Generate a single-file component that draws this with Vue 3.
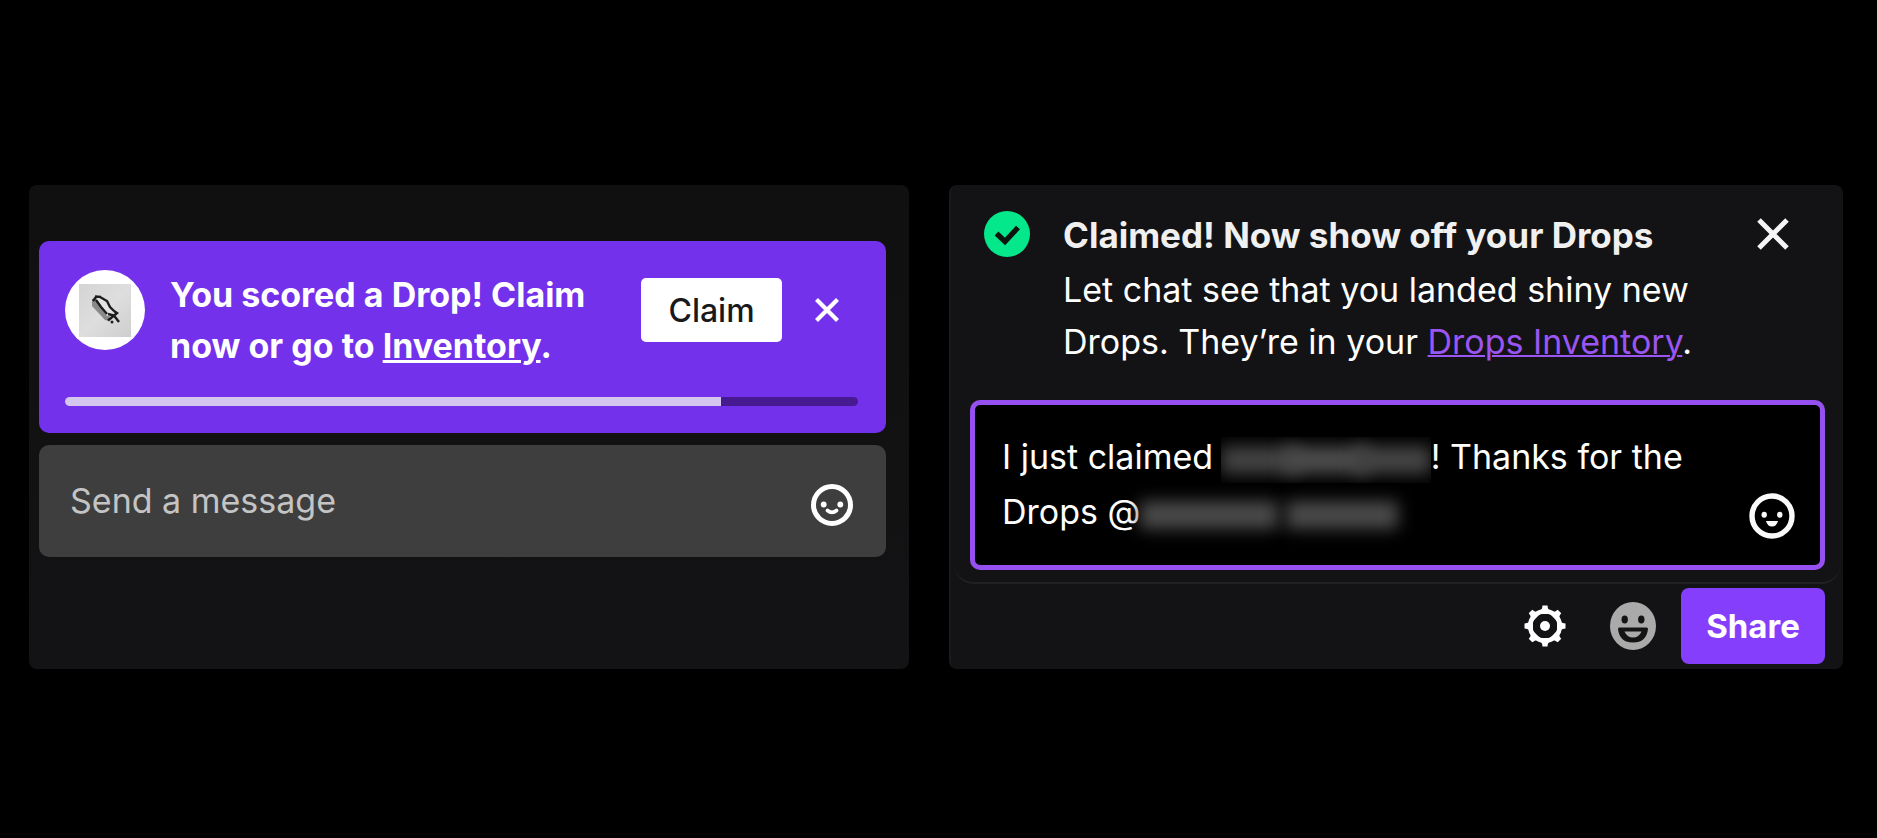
<script setup>
import { ref } from 'vue'

const progress = ref(82.7)
const message = ref('')
</script>

<template>
  <main class="page">
    <section class="panel chat" aria-label="Chat">
      <div class="banner">
        <div class="banner-row">
          <span class="avatar">
            <svg viewBox="0 0 80 80" role="img" aria-label="Drop reward">
              <defs>
                <linearGradient id="tile" x1="0" y1="0" x2="1" y2="1">
                  <stop offset="0" stop-color="#d4d4d4" />
                  <stop offset="0.5" stop-color="#dedede" />
                  <stop offset="1" stop-color="#cecece" />
                </linearGradient>
              </defs>
              <circle cx="40" cy="40" r="40" fill="#fff" />
              <rect x="14" y="14" width="52" height="53" fill="url(#tile)" />
              <path d="M27 29l4 0 14 15-1 7-4-1-13-14z" fill="#8a8a8a" />
              <path d="M32 28l4 0 11 12-1 6-4 0-9-12z" fill="#e4e4e4" />
              <path d="M28 31l3-4M30 26.500l6 .5M35 27l7 4 3 6 4 4M31 30l5 7 6 7M49 41l3 2-3 2.500-6 5M43 44l6 1.500 5 6.500" fill="none" stroke="#1c1c1c" stroke-width="2.400" />
              <circle cx="47" cy="52" r="1.500" fill="#222" />
            </svg>
          </span>
          <p class="banner-text">You scored a Drop! Claim now or go to <a href="#inventory">Inventory</a>.</p>
          <button class="claim" type="button">Claim</button>
          <button class="icon-button close-small" type="button" aria-label="Dismiss">
            <svg width="26" height="26" viewBox="0 0 26 26"><path d="M2.500 2.500l21 21M23.500 2.500l-21 21" stroke="#fff" stroke-width="4.200" /></svg>
          </button>
        </div>
        <div class="track" role="progressbar" aria-label="Time left to claim" :aria-valuenow="progress" aria-valuemin="0" aria-valuemax="100">
          <div class="fill" :style="{ width: progress + '%' }"></div>
        </div>
      </div>

      <div class="composer">
        <input v-model="message" class="message" type="text" placeholder="Send a message" aria-label="Send a message" />
        <button class="icon-button" type="button" aria-label="Emotes">
          <svg width="42" height="42" viewBox="0 0 42 42">
            <circle cx="21" cy="21" r="18.500" fill="none" stroke="#fff" stroke-width="5" />
            <circle cx="12.700" cy="20.500" r="2.900" fill="#fff" />
            <circle cx="29.300" cy="20.500" r="2.900" fill="#fff" />
            <path d="M16.500 26.500q4.500 3.800 9 0" fill="none" stroke="#fff" stroke-width="3.600" stroke-linecap="round" />
          </svg>
        </button>
      </div>
    </section>

    <section class="panel share" aria-label="Share your Drops">
      <div class="share-card">
        <header class="notice">
          <svg class="check" width="46" height="46" viewBox="0 0 46 46" aria-hidden="true">
            <circle cx="23" cy="23" r="23" fill="#05e78b" />
            <path d="M12.500 22.500l8.500 8 13-14" fill="none" stroke="#0b1510" stroke-width="5.400" />
          </svg>
          <div class="notice-text">
            <h2>Claimed! Now show off your Drops</h2>
            <p>Let chat see that you landed shiny new Drops. They’re in your <a href="#drops">Drops Inventory</a>.</p>
          </div>
          <button class="icon-button close-large" type="button" aria-label="Close">
            <svg width="32" height="32" viewBox="0 0 32 32"><path d="M2 2l28 28M30 2l-28 28" stroke="#f4f4f4" stroke-width="5" /></svg>
          </button>
        </header>

        <div class="editor">
          <div class="editor-text" role="textbox" aria-multiline="true" aria-label="Message to chat" contenteditable="true" spellcheck="false">I just claimed <span class="hidden-item" contenteditable="false"><i></i><i></i><i></i></span>! Thanks for the<br />Drops @<span class="hidden-user" contenteditable="false"><i></i><i></i></span></div>
          <button class="icon-button" type="button" aria-label="Emotes">
            <svg width="46" height="46" viewBox="0 0 46 46">
              <circle cx="23" cy="23" r="20" fill="none" stroke="#fafafa" stroke-width="5.400" />
              <ellipse cx="15.200" cy="21.700" rx="2.700" ry="3" fill="#fafafa" />
              <ellipse cx="30.800" cy="21.700" rx="2.700" ry="3" fill="#fafafa" />
              <path d="M17 28h12q-1.500 5.500-6 5.500t-6-5.500z" fill="#fafafa" />
            </svg>
          </button>
        </div>
      </div>

      <footer class="actions">
        <button class="icon-button" type="button" aria-label="Settings">
          <svg width="42" height="42" viewBox="0 0 42 42">
            <g fill="#fff">
              <path v-for="n in 8" :key="n" d="M13 9q5.300-3 5.500-8.500h5q.2 5.500 5.500 8.500z" :transform="`rotate(${n * 45} 21 21)`" />
            </g>
            <circle cx="21" cy="21" r="14.800" fill="none" stroke="#fff" stroke-width="4.600" />
            <circle cx="21" cy="21" r="5" fill="#fff" />
          </svg>
        </button>
        <button class="icon-button" type="button" aria-label="Reactions">
          <svg width="46" height="48" viewBox="0 0 46 48">
            <ellipse cx="23" cy="24" rx="23" ry="24" fill="#aaa" />
            <ellipse cx="14.700" cy="17.500" rx="3.200" ry="4" fill="#141414" />
            <ellipse cx="31.300" cy="17.500" rx="3.200" ry="4" fill="#141414" />
            <path d="M9.500 27h27q-1.500 12-13.500 12t-13.500-12z" fill="#141414" stroke="#141414" stroke-width="3" stroke-linejoin="round" />
            <path d="M14.500 29.500h17q-2.500 6-8.500 6t-8.500-6z" fill="#aaa" />
          </svg>
        </button>
        <button class="share-button" type="button">Share</button>
      </footer>
    </section>
  </main>
</template>

<style>
body {
  background: #000;
}
</style>

<style scoped>
.page {
  box-sizing: border-box;
  min-height: 100vh;
  padding: 185px 34px 40px 29px;
  display: grid;
  grid-template-columns: 880fr 894fr;
  align-items: start;
  align-content: start;
  gap: 40px;
  background: #000;
  color: #fff;
  font-family: Inter, "Liberation Sans", sans-serif;
}

.panel {
  box-sizing: border-box;
  min-height: 484px;
  border-radius: 8px;
  background: #131315;
}

.chat {
  padding: 56px 23px 56px 10px;
  display: flex;
  flex-direction: column;
  gap: 12px;
  background: linear-gradient(#101010, #131315);
}

.banner {
  box-sizing: border-box;
  padding: 28px 28px 27px 26px;
  border-radius: 10px;
  background: #7431eb;
}

.banner-row {
  display: flex;
  align-items: flex-start;
}

.avatar {
  flex: none;
  width: 80px;
  height: 80px;
  margin: 1px 25px 0 0;
}

.avatar svg,
.icon-button svg {
  display: block;
}

.banner-text {
  flex: 1;
  margin: 0;
  max-width: 430px;
  font-size: 34px;
  font-weight: 700;
  line-height: 51px;
}

.banner-text a {
  color: inherit;
  text-decoration-thickness: 3px;
}

.claim {
  width: 141px;
  height: 64px;
  margin: 9px 32px 0 auto;
  padding: 0;
  border: 0;
  border-radius: 5px;
  background: #fff;
  color: #19191b;
  font: 500 32px Inter, "Liberation Sans", sans-serif;
}

.icon-button {
  flex: none;
  padding: 0;
  border: 0;
  background: none;
}

.close-small {
  margin: 28px 18px 0 0;
}

.track {
  height: 9px;
  margin-top: 26px;
  border-radius: 5px;
  overflow: hidden;
  background: #471a91;
}

.fill {
  height: 100%;
  background: #d4c6ee;
}

.composer {
  box-sizing: border-box;
  min-height: 112px;
  padding: 0 33px 0 31px;
  display: flex;
  align-items: center;
  gap: 20px;
  border-radius: 10px;
  background: #3e3e3e;
}

.message {
  flex: 1;
  min-width: 0;
  height: 64px;
  padding: 0 0 2px;
  border: 0;
  outline: 0;
  background: none;
  color: #fff;
  font: 400 34px Inter, "Liberation Sans", sans-serif;
}

.message::placeholder {
  color: #c4c4c4;
  opacity: 1;
}

.composer .icon-button {
  margin-top: 8px;
}

.share {
  padding: 0 2px 5px 3px;
  border-left: 2px solid #1a1a1c;
}

.share-card {
  padding: 24px 16px 12px;
  border-bottom: 2px solid #212123;
  border-radius: 0 0 20px 20px;
}

.notice {
  display: flex;
  align-items: flex-start;
  padding: 0 36px 0 14px;
}

.check {
  flex: none;
  margin: 2px 33px 0 0;
}

.notice-text {
  flex: 1;
}

.notice h2,
.notice p {
  margin: 0;
}

.notice h2 {
  color: #f0f0f0;
  font-size: 35px;
  font-weight: 700;
  line-height: 53px;
}

.notice p {
  max-width: 640px;
  margin-top: 2px;
  font-size: 34px;
  line-height: 52px;
}

.notice a {
  color: #9b55f2;
  text-decoration-thickness: 2px;
}

.close-large {
  margin-top: 9px;
}

.editor {
  box-sizing: border-box;
  min-height: 170px;
  margin-top: 32px;
  padding: 24px 25px 24px 27px;
  display: flex;
  align-items: flex-start;
  border: 5px solid #9650f0;
  border-radius: 10px;
  background: #000;
}

.editor-text {
  flex: 1;
  outline: 0;
  font-size: 34px;
  line-height: 55px;
}

.editor .icon-button {
  margin-top: 64px;
}

.hidden-item,
.hidden-user {
  display: inline-flex;
  align-items: center;
  height: 46px;
  vertical-align: middle;
}

.hidden-item {
  width: 210px;
  margin-left: -2px;
  overflow: hidden;
}

.hidden-user {
  width: 262px;
  gap: 8px;
}

.hidden-item i,
.hidden-user i {
  flex: none;
  height: 28px;
  background: #4a4a4a;
  filter: blur(8px);
}

.hidden-item i {
  width: 78px;
  background: #424242;
}

.hidden-item i + i {
  width: 84px;
  margin-left: -14px;
  background: #4c4c4c;
}

.hidden-item i + i + i {
  width: 76px;
  background: #444;
}

.hidden-user i {
  width: 138px;
}

.hidden-user i + i {
  width: 112px;
}

.actions {
  padding: 4px 16px 0;
  display: flex;
  align-items: center;
  justify-content: flex-end;
}

.actions .icon-button:first-child {
  margin-right: 44px;
}

.share-button {
  width: 144px;
  height: 76px;
  margin-left: 25px;
  padding: 0;
  border: 0;
  border-radius: 8px;
  background: #853ffc;
  color: #fff;
  font: 700 33px Inter, "Liberation Sans", sans-serif;
}
</style>
